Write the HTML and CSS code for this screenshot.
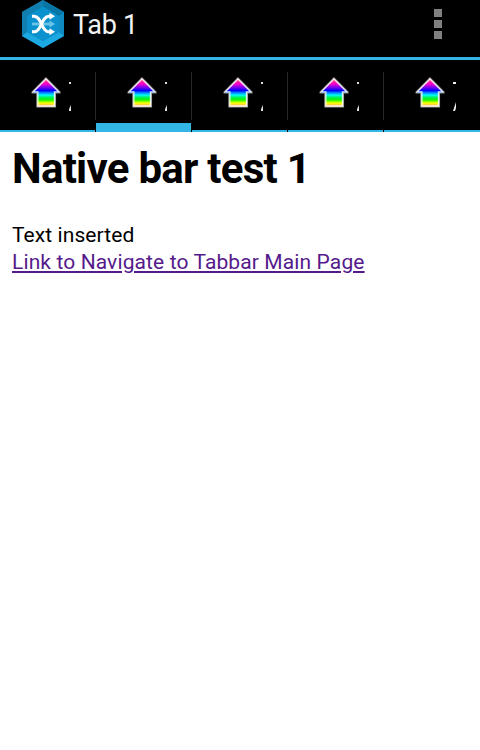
FILE: index.html
```
<!DOCTYPE html>
<html lang="en">
<head>
<meta charset="utf-8">
<title>Tab 1</title>
<link rel="stylesheet" href="styles.css">
</head>
<body>
<svg class="defs" width="0" height="0">
  <defs>
    <linearGradient id="rainbow" gradientUnits="userSpaceOnUse" x1="0" y1="2" x2="0" y2="31">
      <stop offset="0" stop-color="#ff5a5a"/><stop offset=".16" stop-color="#ff00c8"/>
      <stop offset=".3" stop-color="#7000f0"/><stop offset=".4" stop-color="#0000ff"/>
      <stop offset=".48" stop-color="#0090ff"/><stop offset=".56" stop-color="#00fff0"/>
      <stop offset=".63" stop-color="#00f060"/><stop offset=".72" stop-color="#10f800"/>
      <stop offset=".83" stop-color="#ffff00"/><stop offset=".91" stop-color="#ffbe60"/>
      <stop offset="1" stop-color="#ffb080"/>
    </linearGradient>
    <g id="arrow">
      <path d="M15 .8 29 15v1H24.5V30H5.9V16H1.1V15Z" fill="url(#rainbow)" stroke="#9a9a9a" stroke-width="1.1"/>
      <path d="M15 2 27.6 14.8H23.5V29H6.9V14.8H2.4Z" fill="none" stroke="#fff" stroke-opacity=".85" stroke-width="1.3"/>
    </g>
  </defs>
</svg>
<header class="action-bar">
  <svg class="logo" width="44" height="48" viewBox="0 0 44 48">
    <path d="M22 0 43 12V36L22 48 1 36V12Z" fill="#0d7fb2"/>
    <path d="M1 12 22 0V7L6 16V32L1 36Z" fill="#107eae"/>
    <path d="M22 0 43 12 38 16 22 7Z" fill="#0875a5"/>
    <path d="M43 12V36L38 32V16Z" fill="#0f8ac0"/>
    <path d="M1 36 6 32 22 41 38 32 43 36 22 48Z" fill="#1ca9e2"/>
    <path d="M22 6.5 38 16V32L22 41 6 32V16Z" fill="#0b91cd"/>
    <path d="M11 24H29" stroke="#6bc4e7" stroke-width="2.8"/>
    <path d="M28.5 20.5 34 24 28.5 27.5Z" fill="#6bc4e7"/>
    <path d="M11 16.2H13C21 16.2 20 31.8 28 31.8H29.5M11 31.8H13C21 31.8 20 16.2 28 16.2H29.5" fill="none" stroke="#fff" stroke-width="3"/>
    <path d="M28.5 12.7 34 16.2 28.5 19.7ZM28.5 28.3 34 31.8 28.5 35.3Z" fill="#fff"/>
  </svg>
  <span class="title">Tab 1</span>
  <span class="overflow"><i></i><i></i><i></i></span>
</header>
<nav class="tabs">
  <div class="tab"><svg class="arrow" width="30" height="31"><use href="#arrow"/></svg><svg class="clip" width="3" height="30"><path d="M0 1H2V3H0ZM2 24V30H0V28Z" fill="#ddd"/></svg></div>
  <div class="tab active"><svg class="arrow" width="30" height="31"><use href="#arrow"/></svg><svg class="clip" width="3" height="30"><path d="M0 1H2V3H0ZM2 24V30H0V28Z" fill="#ddd"/></svg></div>
  <div class="tab"><svg class="arrow" width="30" height="31"><use href="#arrow"/></svg><svg class="clip" width="3" height="30"><path d="M0 1H2V3H0ZM2 24V30H0V28Z" fill="#ddd"/></svg></div>
  <div class="tab"><svg class="arrow" width="30" height="31"><use href="#arrow"/></svg><svg class="clip" width="3" height="30"><path d="M0 1H2V3H0ZM2 24V30H0V28Z" fill="#ddd"/></svg></div>
  <div class="tab"><svg class="arrow" width="30" height="31"><use href="#arrow"/></svg><svg class="clip" width="3" height="30"><path d="M0 1H3V3H0ZM3 21V27L2 30H0Z" fill="#eee"/></svg></div>
</nav>
<main>
  <h1>Native bar test 1</h1>
  <p>Text inserted</p>
  <a href="#">Link to Navigate to Tabbar Main Page</a>
</main>
</body>
</html>
```
FILE: styles.css
```
body {
  margin: 0;
  background: #fff;
  color: #000;
  font-family: Roboto, sans-serif;
  overflow: hidden;
}
.defs { display: block; }
.action-bar {
  box-sizing: border-box;
  height: 60px;
  display: flex;
  align-items: flex-start;
  padding: 0 38px 0 21px;
  background: #000;
  border-bottom: 3px solid #33b5e5;
}
.logo { flex: none; }
.title {
  margin-left: 8px;
  color: #f3f3f3;
  font-size: 27px;
  line-height: 50px;
  letter-spacing: -.3px;
  white-space: nowrap;
}
.overflow {
  margin: 9px 0 0 auto;
  display: grid;
  gap: 3px;
}
.overflow i {
  width: 8px;
  height: 8px;
  background: #808080;
}
.tabs {
  height: 72px;
  display: grid;
  grid-template-columns: repeat(5, 96px);
  background: #000;
}
.tab {
  box-sizing: border-box;
  display: flex;
  align-items: flex-start;
  padding: 17px 0 0 31px;
  background:
    linear-gradient(#292929, #292929) 95px 12px / 1px 48px no-repeat,
    linear-gradient(#33b5e5, #33b5e5) 0 100% / 95px 2px no-repeat;
}
.tab.active {
  background:
    linear-gradient(#292929, #292929) 95px 12px / 1px 48px no-repeat,
    linear-gradient(#33b5e5, #33b5e5) 0 100% / 95px 9px no-repeat;
}
.tab:last-child {
  background: linear-gradient(#33b5e5, #33b5e5) 0 100% / 96px 2px no-repeat;
}
.clip { margin: 4px 0 0 8px; }
main { padding: 12px; }
h1 {
  margin: 0 0 28px;
  font-size: 42px;
  line-height: 50px;
  font-weight: 700;
  letter-spacing: -.74px;
  white-space: nowrap;
}
p {
  margin: 0;
  font-size: 21px;
  line-height: 27px;
  letter-spacing: .08px;
}
main a {
  display: block;
  width: max-content;
  color: #551a8b;
  font-size: 21px;
  line-height: 27px;
  letter-spacing: .115px;
  white-space: nowrap;
}
```
